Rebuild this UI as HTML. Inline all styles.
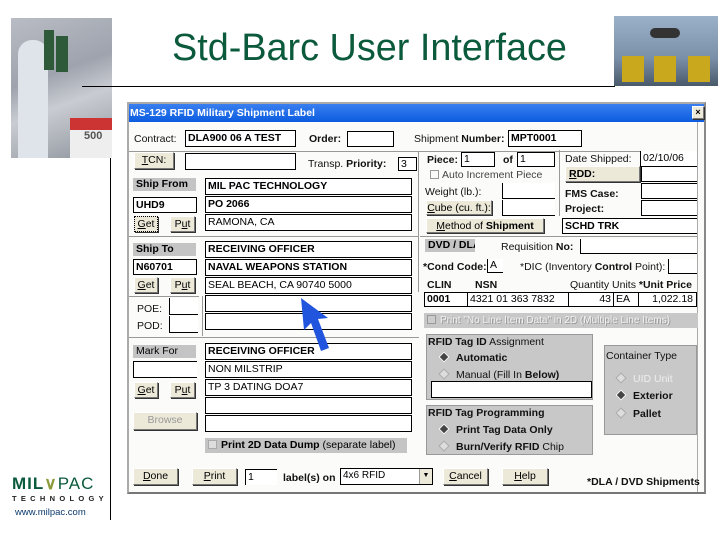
<!DOCTYPE html>
<html><head><meta charset="utf-8"><style>
*{margin:0;padding:0;box-sizing:border-box}
body{width:720px;height:540px;background:#fff;position:relative;overflow:hidden;font-family:"Liberation Sans",sans-serif;}
.a{position:absolute}
.t{position:absolute;font-size:10.5px;color:#111;white-space:nowrap;line-height:12px}
.b{font-weight:bold}
.in{position:absolute;background:#fff;border:1px solid #000;font-size:10.5px;line-height:14px;padding-left:2px;white-space:nowrap;overflow:hidden}
.btn{position:absolute;background:#ece9d8;border:1px solid #fff;border-right-color:#777;border-bottom-color:#777;box-shadow:1px 1px 0 #333;font-size:10.5px;text-align:center;line-height:14px;white-space:nowrap}
.gl{position:absolute;background:#c4c4c4;font-size:10.5px;font-weight:bold;padding-left:3px;line-height:13px;white-space:nowrap}
.grp{position:absolute;background:#c8c8c8;border:1px solid #999}
.hl{position:absolute;height:1px;background:#999}
.vl{position:absolute;width:1px;background:#999}
.rd{display:inline-block;width:8px;height:8px;border:1px solid #aaa;transform:rotate(45deg);margin-right:8px;background:#ddd}
</style></head><body>
<div class="a" style="left:11px;top:18px;width:101px;height:140px;background:linear-gradient(160deg,#b9bcc4 0%,#9ea3ad 40%,#c9ccd2 60%,#8e939c 100%)"></div>
<div class="a" style="left:18px;top:40px;width:30px;height:118px;background:#dfe3ea;border-radius:14px 14px 0 0"></div>
<div class="a" style="left:44px;top:30px;width:10px;height:40px;background:#2f5a3a"></div>
<div class="a" style="left:56px;top:36px;width:12px;height:36px;background:#2f5a3a"></div>
<div class="a" style="left:70px;top:118px;width:42px;height:12px;background:#c33"></div>
<div class="a" style="left:70px;top:130px;width:42px;height:28px;background:#eee;font-size:11px;color:#555;font-weight:bold;padding-left:14px">500</div>
<div class="a" style="left:614px;top:16px;width:104px;height:70px;background:linear-gradient(#9bb1c9,#7a8fa8 60%,#4a5a6a)"></div>
<div class="a" style="left:622px;top:56px;width:22px;height:26px;background:#c9a81e"></div>
<div class="a" style="left:654px;top:56px;width:22px;height:26px;background:#c9a81e"></div>
<div class="a" style="left:688px;top:56px;width:22px;height:26px;background:#c9a81e"></div>
<div class="a" style="left:650px;top:28px;width:30px;height:10px;background:#333;border-radius:5px"></div>
<div class="a" style="left:172px;top:26px;font-size:37.8px;color:#0b5a3c;line-height:44px;white-space:nowrap">Std-Barc User Interface</div>
<div class="a" style="left:82px;top:86px;width:533px;height:1px;background:#000"></div>
<div class="a" style="left:110px;top:158px;width:1px;height:362px;background:#000"></div>
<div class="a" style="left:12px;top:475px;font-size:17px;font-weight:bold;color:#0b5a3c;letter-spacing:1px;line-height:18px">MIL<span style="color:#8a9a3a">∨</span><span style="font-weight:normal">PAC</span></div>
<div class="a" style="left:12px;top:494px;font-size:7.5px;font-weight:bold;letter-spacing:4.3px;color:#222">TECHNOLOGY</div>
<div class="a" style="left:15px;top:507px;font-size:9.5px;color:#0b3a6c">www.milpac.com</div>
<div class="a" style="left:127px;top:102px;width:579px;height:392px;background:#fbfbfa;border:2px solid #aaa;border-right-color:#888;border-bottom-color:#777"></div>
<div class="a" style="left:129px;top:104px;width:575px;height:18px;background:linear-gradient(#3a7ff0,#0a5ce0);color:#fff;font-size:10.5px;font-weight:bold;line-height:18px;padding-left:1px">MS-129 RFID Military Shipment Label</div>
<div class="btn" style="left:692px;top:106px;width:12px;height:13px;font-size:9px;line-height:11px;font-weight:bold">×</div>
<div class="vl" style="left:697px;top:122px;height:370px;background:#aaa"></div>

<div class="t" style="left:134px;top:133px">Contract:</div>
<div class="in b" style="left:185px;top:130px;width:111px;height:17px">DLA900 06 A TEST</div>
<div class="t b" style="left:309px;top:133px">Order:</div>
<div class="in" style="left:347px;top:131px;width:47px;height:16px"></div>
<div class="t" style="left:414px;top:133px">Shipment <b>Number:</b></div>
<div class="in b" style="left:508px;top:130px;width:74px;height:17px">MPT0001</div>
<div class="hl" style="left:129px;top:151px;width:566px"></div>

<div class="btn" style="left:134px;top:152px;width:40px;height:17px"><u>T</u>CN:</div>
<div class="in" style="left:185px;top:153px;width:111px;height:17px"></div>
<div class="t" style="left:308px;top:158px">Transp. <b>Priority:</b></div>
<div class="in" style="left:398px;top:157px;width:19px;height:14px;line-height:12px">3</div>
<div class="vl" style="left:418px;top:152px;height:140px"></div>

<div class="gl" style="left:133px;top:178px;width:63px">Ship From</div>
<div class="in b" style="left:205px;top:178px;width:207px;height:17px">MIL PAC TECHNOLOGY</div>
<div class="in b" style="left:133px;top:197px;width:64px;height:16px">UHD9</div>
<div class="in b" style="left:205px;top:196px;width:207px;height:17px">PO 2066</div>
<div class="btn" style="left:134px;top:216px;width:24px;height:16px;border:1px dotted #000"><u>G</u>et</div>
<div class="btn" style="left:170px;top:216px;width:25px;height:16px">P<u>u</u>t</div>
<div class="in" style="left:205px;top:214px;width:207px;height:17px">RAMONA, CA</div>
<div class="hl" style="left:129px;top:236px;width:290px"></div>

<div class="gl" style="left:133px;top:243px;width:63px">Ship To</div>
<div class="in b" style="left:205px;top:241px;width:207px;height:17px">RECEIVING OFFICER</div>
<div class="in b" style="left:133px;top:259px;width:64px;height:16px">N60701</div>
<div class="in b" style="left:205px;top:259px;width:207px;height:17px">NAVAL WEAPONS STATION</div>
<div class="btn" style="left:134px;top:277px;width:24px;height:16px"><u>G</u>et</div>
<div class="btn" style="left:170px;top:277px;width:25px;height:16px">P<u>u</u>t</div>
<div class="in" style="left:205px;top:277px;width:207px;height:17px">SEAL BEACH, CA 90740 5000</div>
<div class="hl" style="left:129px;top:296px;width:70px"></div>
<div class="vl" style="left:202px;top:296px;height:40px"></div>
<div class="t" style="left:137px;top:303px">POE:</div>
<div class="in" style="left:169px;top:298px;width:29px;height:17px;border-right:none;border-top:none"></div>
<div class="t" style="left:137px;top:320px">POD:</div>
<div class="in" style="left:169px;top:316px;width:29px;height:17px;border-right:none;border-top:none"></div>
<div class="in" style="left:205px;top:295px;width:207px;height:17px"></div>
<div class="in" style="left:205px;top:313px;width:207px;height:17px"></div>
<div class="hl" style="left:129px;top:337px;width:290px"></div>

<div class="gl" style="left:133px;top:345px;width:63px;font-weight:normal">Mark For</div>
<div class="in b" style="left:205px;top:343px;width:207px;height:17px">RECEIVING OFFICER</div>
<div class="in" style="left:133px;top:361px;width:64px;height:17px;border-right:none"></div>
<div class="in" style="left:205px;top:361px;width:207px;height:17px">NON MILSTRIP</div>
<div class="btn" style="left:134px;top:382px;width:24px;height:16px"><u>G</u>et</div>
<div class="btn" style="left:170px;top:382px;width:25px;height:16px">P<u>u</u>t</div>
<div class="in" style="left:205px;top:379px;width:207px;height:17px">TP 3 DATING DOA7</div>
<div class="in" style="left:205px;top:397px;width:207px;height:17px"></div>
<div class="btn" style="left:133px;top:412px;width:64px;height:18px;color:#999">Browse</div>
<div class="in" style="left:205px;top:415px;width:207px;height:17px"></div>
<div class="a" style="left:205px;top:438px;width:202px;height:15px;background:#c4c4c4;font-size:10.5px;font-weight:bold;line-height:15px;padding-left:3px;white-space:nowrap"><span style="display:inline-block;width:9px;height:9px;background:#ddd;border:1px solid #aaa;vertical-align:-1px;margin-right:4px"></span>Print 2D Data Dump <span style="font-weight:normal">(separate label)</span></div>

<div class="t b" style="left:427px;top:154px">Piece:</div>
<div class="in" style="left:461px;top:152px;width:34px;height:15px;line-height:13px">1</div>
<div class="t b" style="left:503px;top:154px">of</div>
<div class="in" style="left:517px;top:152px;width:38px;height:15px;line-height:13px">1</div>
<div class="t" style="left:430px;top:169px;color:#444"><span style="display:inline-block;width:9px;height:9px;border:1px solid #999;vertical-align:-1px;margin-right:3px"></span>Auto Increment Piece</div>
<div class="t" style="left:425px;top:186px">Weight (lb.):</div>
<div class="in" style="left:502px;top:183px;width:53px;height:16px;border-right:none;border-top:none"></div>
<div class="btn" style="left:426px;top:200px;width:66px;height:15px"><u>C</u>ube (cu. ft.):</div>
<div class="in" style="left:502px;top:200px;width:53px;height:16px;border-right:none;border-top:none"></div>
<div class="btn" style="left:426px;top:218px;width:118px;height:15px"><u>M</u>ethod of <b>Shipment</b></div>
<div class="vl" style="left:559px;top:150px;height:66px"></div>
<div class="t" style="left:565px;top:153px">Date Shipped:</div>
<div class="in" style="left:640px;top:151px;width:57px;height:16px;border-right:none;border-top:none">02/10/06</div>
<div class="btn" style="left:565px;top:166px;width:75px;height:16px;text-align:left;padding-left:3px;font-weight:bold"><u>R</u>DD:</div>
<div class="in" style="left:641px;top:166px;width:56px;height:16px;border-right:none"></div>
<div class="t b" style="left:565px;top:188px">FMS Case:</div>
<div class="in" style="left:641px;top:183px;width:56px;height:16px;border-right:none"></div>
<div class="t b" style="left:565px;top:203px">Project:</div>
<div class="in" style="left:641px;top:200px;width:56px;height:16px;border-right:none"></div>
<div class="in b" style="left:562px;top:218px;width:135px;height:16px;border-right:none">SCHD TRK</div>
<div class="hl" style="left:420px;top:236px;width:277px"></div>
<div class="gl" style="left:425px;top:239px;width:50px;overflow:hidden">DVD / DLA</div>
<div class="t" style="left:501px;top:241px">Requisition <b>No:</b></div>
<div class="in" style="left:580px;top:239px;width:117px;height:15px;border-right:none;border-top:none"></div>
<div class="t b" style="left:423px;top:261px">*Cond Code:</div>
<div class="in" style="left:487px;top:259px;width:16px;height:14px;line-height:12px;border-right:none;border-top:none">A</div>
<div class="t" style="left:520px;top:261px">*DIC (Inventory <b>Control</b> Point):</div>
<div class="in" style="left:668px;top:259px;width:29px;height:15px;border-right:none;border-top:none"></div>
<div class="t b" style="left:427px;top:279px">CLIN</div>
<div class="t b" style="left:475px;top:279px">NSN</div>
<div class="t" style="left:570px;top:279px">Quantity Units <b>*Unit Price</b></div>
<div class="in b" style="left:424px;top:292px;width:44px;height:15px;line-height:13px">0001</div>
<div class="in" style="left:467px;top:292px;width:102px;height:15px;line-height:13px">4321 01 363 7832</div>
<div class="in" style="left:568px;top:292px;width:46px;height:15px;line-height:13px;text-align:right;padding-right:2px">43</div>
<div class="in" style="left:613px;top:292px;width:26px;height:15px;line-height:13px">EA</div>
<div class="in" style="left:638px;top:292px;width:59px;height:15px;line-height:13px;text-align:right;padding-right:3px">1,022.18</div>
<div class="a" style="left:424px;top:313px;width:274px;height:15px;background:#c8c8c8;font-size:10px;line-height:15px;padding-left:3px;white-space:nowrap;overflow:hidden"><span style="display:inline-block;width:9px;height:9px;border:1px solid #999;background:#ccc;vertical-align:-1px;margin-right:4px"></span><span style="color:#f2f2f2;text-shadow:1px 1px 0 #999">Print "No Line Item Data" in 2D (Multiple Line Items)</span></div>

<div class="grp" style="left:426px;top:334px;width:167px;height:66px"></div>
<div class="t" style="left:428px;top:336px"><b>RFID Tag ID</b> Assignment</div>
<div class="t b" style="left:440px;top:352px"><span class="rd" style="background:#444;border-color:#fff"></span>Automatic</div>
<div class="t" style="left:440px;top:369px"><span class="rd"></span>Manual (Fill In <b>Below)</b></div>
<div class="in" style="left:431px;top:381px;width:161px;height:17px"></div>
<div class="grp" style="left:426px;top:405px;width:167px;height:50px"></div>
<div class="t b" style="left:428px;top:407px">RFID Tag Programming</div>
<div class="t b" style="left:440px;top:424px"><span class="rd" style="background:#444;border-color:#fff"></span>Print Tag Data Only</div>
<div class="t" style="left:440px;top:441px"><span class="rd"></span><b>Burn/Verify RFID</b> Chip</div>
<div class="grp" style="left:604px;top:345px;width:93px;height:90px"></div>
<div class="t" style="left:606px;top:350px">Container Type</div>
<div class="t" style="left:617px;top:373px;color:#eee"><span class="rd"></span>UID Unit</div>
<div class="t b" style="left:617px;top:390px"><span class="rd" style="background:#444;border-color:#fff"></span>Exterior</div>
<div class="t b" style="left:617px;top:408px"><span class="rd"></span>Pallet</div>

<div class="btn" style="left:133px;top:468px;width:45px;height:17px"><u>D</u>one</div>
<div class="btn" style="left:192px;top:468px;width:45px;height:17px"><u>P</u>rint</div>
<div class="in" style="left:245px;top:469px;width:32px;height:16px;border-right:none;border-bottom:none">1</div>
<div class="t b" style="left:283px;top:472px">label(s) on</div>
<div class="in" style="left:340px;top:468px;width:93px;height:17px;font-size:10px">4x6 RFID<span style="position:absolute;right:0;top:0;width:13px;height:15px;background:#ece9d8;border-left:1px solid #999;font-size:7px;text-align:center">▼</span></div>
<div class="btn" style="left:443px;top:468px;width:45px;height:17px"><u>C</u>ancel</div>
<div class="btn" style="left:502px;top:468px;width:46px;height:17px"><u>H</u>elp</div>
<div class="t b" style="left:587px;top:476px">*DLA / DVD Shipments</div>

<svg class="a" style="left:296px;top:296px" width="40" height="64" viewBox="0 0 40 64"><polygon points="5,2 32,22 22,23 33,52 25,55 15,27 8,34" fill="#2255dd"/></svg>
</body></html>
